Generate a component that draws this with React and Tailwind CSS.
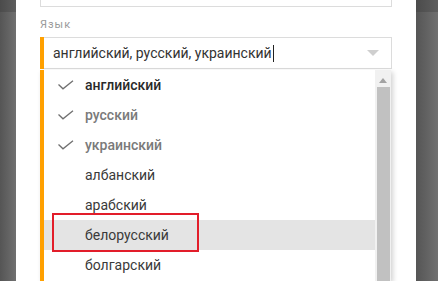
import React from "react";

const languages = [
  { name: "английский", checked: true, tone: "dark" },
  { name: "русский", checked: true, tone: "muted" },
  { name: "украинский", checked: true, tone: "muted" },
  { name: "албанский" },
  { name: "арабский" },
  { name: "белорусский", hover: true },
  { name: "болгарский" },
];

const Check = () => (
  <svg width="16" height="10" viewBox="0 0 16 10" fill="none">
    <path d="M0.5 4.5 L5 8.8 L15 0.8" stroke="#707070" strokeWidth="1.3" />
  </svg>
);

const Side = ({ width }) => (
  <div className={`flex flex-col h-full ${width}`}>
    <div className="h-[12px] bg-gradient-to-r from-[#4b4b4b] to-[#5e5e5e]" />
    <div className="flex-1 bg-gradient-to-r from-[#555555] to-[#707070]" />
  </div>
);

const App = () => {
  return (
    <div
      className="relative flex w-[438px] h-[281px] overflow-hidden bg-white"
      style={{ fontFamily: "Roboto, 'Liberation Sans', sans-serif" }}
    >
      <Side width="w-[16px]" />

      <div className="flex-1 flex flex-col px-[24px] bg-white">
        {/* previous field */}
        <div className="h-[7px] border border-t-0 border-[#dcdcdc]" />

        <div className="pt-[11px] h-[30px] text-[11px] leading-[14px] tracking-[1px] text-[#9a9a9a]">
          Язык
        </div>

        {/* input */}
        <div className="flex items-center h-[32px] border border-[#dcdcdc] border-l-0">
          <div className="w-[4px] h-[32px] bg-[#ffa000] -my-px" />
          <div className="flex-1 flex items-center pl-[9px] text-[14px] text-[#333]">
            английский, русский, украинский
            <span className="inline-block w-px h-[17px] bg-[#222] ml-px" />
          </div>
          <svg width="12" height="7" viewBox="0 0 12 7" className="mr-[12px] mt-px">
            <path d="M0 0 L12 0 L6 6 Z" fill="#cfcfcf" />
          </svg>
        </div>

        {/* dropdown */}
        <div className="flex flex-1 mt-px mr-[1px] bg-white shadow-[2px_2px_5px_rgba(0,0,0,0.18)]">
          <div className="w-[4px] bg-[#ffa000]" />
          <div className="flex-1 flex flex-col">
            {languages.map((l) => (
              <div
                key={l.name}
                className={`flex items-center h-[30px] shrink-0 text-[14px] ${
                  l.hover ? "bg-[#e4e4e4]" : ""
                }`}
              >
                <div className="w-[41px] pl-[14px] flex items-center">
                  {l.checked && <Check />}
                </div>
                <span
                  className={
                    l.checked
                      ? l.tone === "dark"
                        ? "font-medium text-[#2a2a2a]"
                        : "font-medium text-[#7a7a7a]"
                      : "text-[#3a3a3a]"
                  }
                >
                  {l.name}
                </span>
              </div>
            ))}
          </div>
          {/* scrollbar */}
          <div className="w-[16px] flex flex-col items-center bg-[#f1f1f1]">
            <svg width="8" height="5" viewBox="0 0 8 5" className="mt-[8px] mb-[4px]">
              <path d="M0 5 L8 5 L4 0 Z" fill="#a3a3a3" />
            </svg>
            <div className="w-[13px] flex-1 bg-[#c1c1c1]" />
          </div>
        </div>
      </div>

      <Side width="w-[22px]" />

      {/* annotation */}
      <div className="absolute left-[52px] top-[213px] w-[147px] h-[39px] border-2 border-[#e21d2a]" />
    </div>
  );
};

export default App;
